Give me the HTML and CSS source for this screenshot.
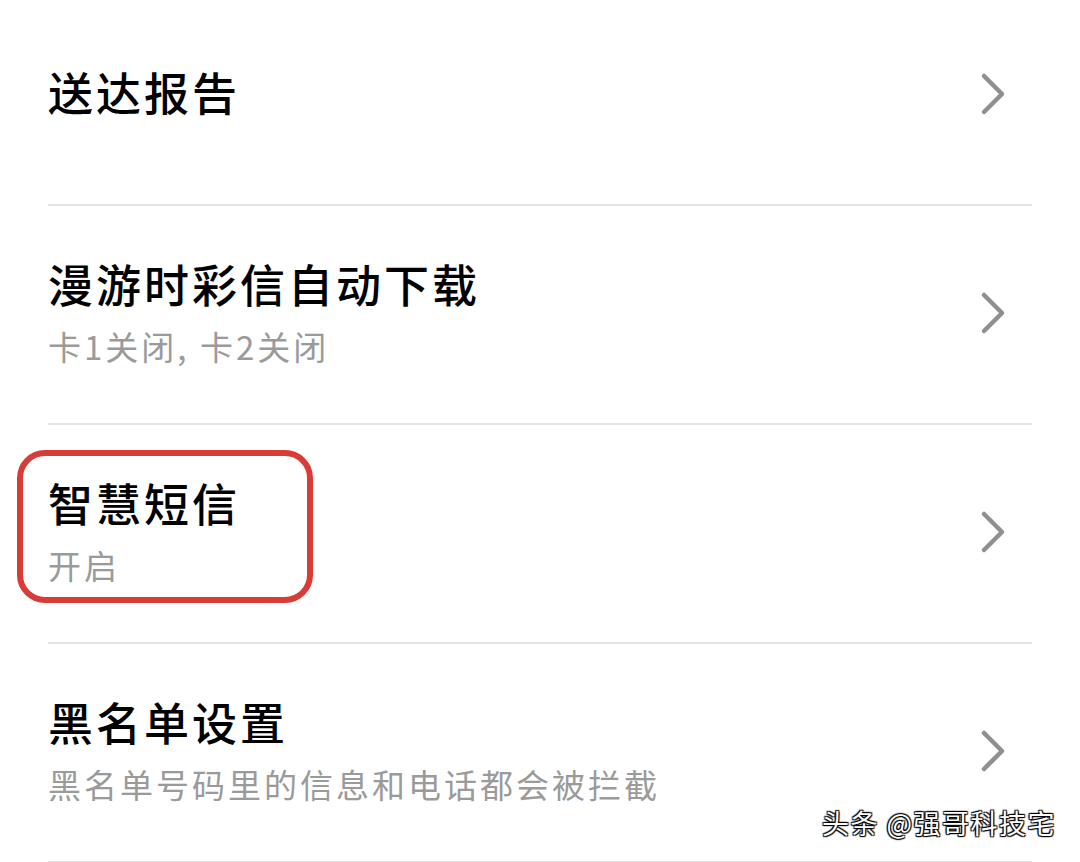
FILE: index.html
```html
<!DOCTYPE html>
<html lang="zh">
<head>
    <meta charset="UTF-8">
    <meta name="viewport" content="width=device-width, initial-scale=1.0">
    <title>短信设置</title>
    <link rel="stylesheet" href="styles.css">
</head>
<body>

    <div class="settings">
        <div class="item">
            <div class="text">
                <p class="title">送达报告</p>
            </div>
            <svg class="arrow" viewBox="0 0 30 44"><path d="M6 4 L24 22 L6 40"/></svg>
        </div>

        <div class="item">
            <div class="text">
                <p class="title">漫游时彩信自动下载</p>
                <p class="sub">卡1关闭, 卡2关闭</p>
            </div>
            <svg class="arrow" viewBox="0 0 30 44"><path d="M6 4 L24 22 L6 40"/></svg>
        </div>

        <div class="item">
            <!-- 红框标注 -->
            <div class="mark"></div>
            <div class="text">
                <p class="title">智慧短信</p>
                <p class="sub">开启</p>
            </div>
            <svg class="arrow" viewBox="0 0 30 44"><path d="M6 4 L24 22 L6 40"/></svg>
        </div>

        <div class="item">
            <div class="text">
                <p class="title">黑名单设置</p>
                <p class="sub">黑名单号码里的信息和电话都会被拦截</p>
            </div>
            <svg class="arrow" viewBox="0 0 30 44"><path d="M6 4 L24 22 L6 40"/></svg>
        </div>
    </div>

    <div class="watermark">头条 @强哥科技宅</div>

</body>
</html>
```

FILE: styles.css
```css
body {
    margin: 0;
    padding: 0;
    background: #fff;
    font-family: "Noto Sans CJK SC", "Noto Sans", sans-serif;
    overflow: hidden;
    height: 862px;
    position: relative;
}

.settings {
    margin: -13px 48px 0;
}

.item {
    position: relative;
    height: 217px;
    display: flex;
    align-items: center;
    justify-content: space-between;
    border-bottom: 2px solid #e3e3e3;
    padding-right: 24px;
}

.text {
    display: flex;
    flex-direction: column;
    padding-bottom: 7px;
}

.title {
    margin: 0;
    font-size: 45px;
    line-height: 70px;
    letter-spacing: 3px;
    color: #000;
    font-weight: 500;
}

.sub {
    margin: 0;
    font-size: 33px;
    line-height: 54px;
    letter-spacing: 3px;
    color: #9a9a9a;
}

.arrow {
    width: 30px;
    height: 44px;
    margin-bottom: 3px;
    fill: none;
    stroke: #8f8f8f;
    stroke-width: 4.5;
    stroke-linecap: round;
    stroke-linejoin: round;
}

.mark {
    position: absolute;
    left: -31px;
    top: 25px;
    width: 284px;
    height: 141px;
    border: 6px solid #d83c36;
    border-radius: 28px;
}

.watermark {
    position: absolute;
    right: 24px;
    bottom: 20px;
    font-size: 27px;
    letter-spacing: 1.5px;
    color: #fff;
    text-shadow: -1px -1px 1px #000, 1px 1px 1px #000, 1px -1px 1px #000, -1px 1px 1px #000;
}
```
